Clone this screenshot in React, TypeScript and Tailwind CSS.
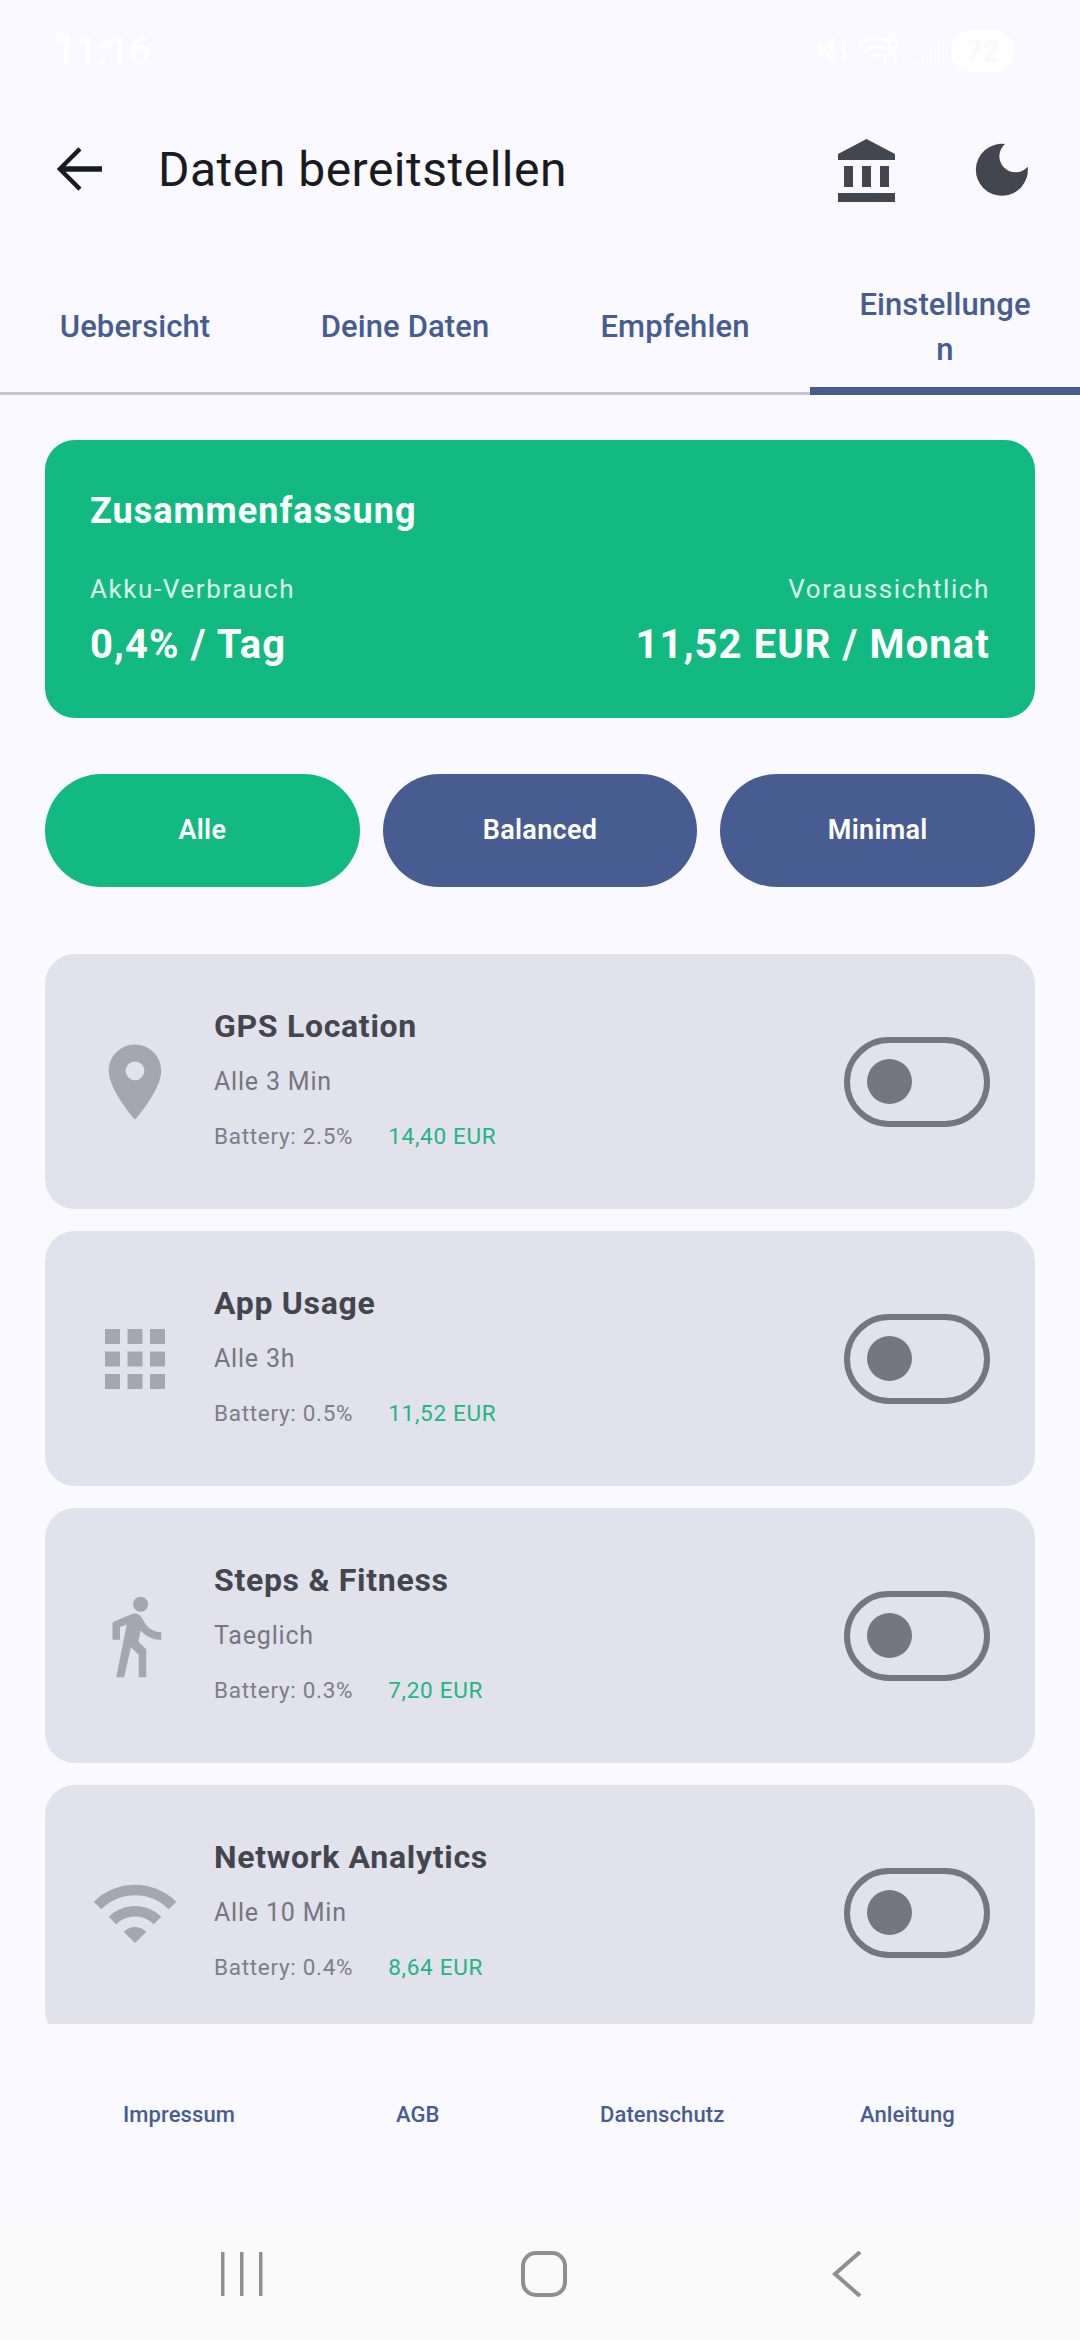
const rows = [
  { title: 'GPS Location', freq: 'Alle 3 Min', battery: 'Battery: 2.5%', price: '14,40 EUR', icon: 'M12 2C8.13 2 5 5.13 5 9c0 5.25 7 13 7 13s7-7.75 7-13c0-3.87-3.13-7-7-7zm0 9.5a2.5 2.5 0 010-5 2.5 2.5 0 010 5z' },
  { title: 'App Usage', freq: 'Alle 3h', battery: 'Battery: 0.5%', price: '11,52 EUR', icon: 'M4 8h4V4H4v4zm6 12h4v-4h-4v4zm-6 0h4v-4H4v4zm0-6h4v-4H4v4zm6 0h4v-4h-4v4zm6-10v4h4V4h-4zm-6 4h4V4h-4v4zm6 6h4v-4h-4v4zm0 6h4v-4h-4v4z' },
  { title: 'Steps & Fitness', freq: 'Taeglich', battery: 'Battery: 0.3%', price: '7,20 EUR', icon: 'M13.5 5.5c1.1 0 2-.9 2-2s-.9-2-2-2-2 .9-2 2 .9 2 2 2zM9.8 8.9L7 23h2.1l1.8-8 2.1 2v6h2v-7.5l-2.1-2 .6-3C14.8 12 16.8 13 19 13v-2c-1.9 0-3.5-1-4.3-2.4l-1-1.6c-.4-.6-1-1-1.7-1-.3 0-.5.1-.8.1L6 8.3V13h2V9.6l1.8-.7' },
  { title: 'Network Analytics', freq: 'Alle 10 Min', battery: 'Battery: 0.4%', price: '8,64 EUR', icon: 'M1 9l2 2c4.97-4.97 13.03-4.97 18 0l2-2C16.93 2.93 7.08 2.93 1 9zm8 8l3 3 3-3c-1.65-1.66-4.34-1.66-6 0zm-4-4l2 2c2.76-2.76 7.24-2.76 10 0l2-2C15.14 9.14 8.87 9.14 5 13z' },
];

function StatusBar() {
  return (
    <div className="flex h-[104px] items-center justify-between pb-[2px] pl-[54px] pr-[66px] text-white">
      <span className="text-[38px] font-medium leading-none">11:16</span>
      <div className="flex items-center gap-[10px]">
        <svg viewBox="0 0 30 32" className="h-[32px] w-[30px]" fill="currentColor">
          <path d="M1 11h6l11-9v28l-11-9H1z" />
          <path d="M2 2l18 26" stroke="#f9f9ff" strokeWidth="2" />
          <path d="M25 2c3 3-2 5 1 8s-2 5 1 8-2 5 1 8" fill="none" stroke="currentColor" strokeWidth="2" />
        </svg>
        <svg viewBox="0 0 46 32" className="h-[32px] w-[46px]" fill="none" stroke="currentColor" strokeWidth="3">
          <path d="M2 10c8-7 20-8 30-4M8 16c6-5 14-5 20-2M14 21c3-2 6-2 9 0" />
          <path d="M28 20v10M38 30V20" />
          <circle cx="36" cy="9" r="4" />
        </svg>
        <svg viewBox="0 0 28 30" className="h-[30px] w-[28px]" fill="currentColor" opacity="0.6">
          <rect x="0" y="24" width="3" height="5" />
          <rect x="8" y="17" width="3" height="12" />
          <rect x="16" y="9" width="3" height="20" />
          <rect x="24" y="1" width="3" height="28" />
        </svg>
        <span className="flex h-[42px] w-[63px] items-center justify-center rounded-full bg-white text-[30px] font-bold leading-none text-[#f9f9ff]">
          72
        </span>
      </div>
    </div>
  );
}

function Header() {
  return (
    <div className="flex h-[130px] items-center pl-[56px]">
      <svg viewBox="0 0 48 46" className="h-[46px] w-[46px]" fill="none" stroke="#1a1b20" strokeWidth="4.5">
        <path d="M48 23H6" strokeWidth="5.5" />
        <path d="M25 2L4 23l21 21" />
      </svg>
      <h1 className="ml-[56px] pt-[2px] text-[48px] leading-none tracking-[0.5px] text-[#1a1b20]">Daten bereitstellen</h1>
      <svg viewBox="0 0 24 24" className="ml-auto mt-[6px] h-[72px] w-[72px]" fill="#44464f">
        <path d="M4 10v7h3v-7H4zm6 0v7h3v-7h-3zM2 22h19v-3H2v3zm14-12v7h3v-7h-3zm-4.5-9L2 6v2h19V6l-9.5-5z" />
      </svg>
      <svg viewBox="0 0 72 72" className="ml-[62px] mr-[42px] mt-[2px] h-[72px] w-[72px]" fill="#44464f">
        <path d="M39 10A26 26 0 1 0 61.7 32.7A16.1 16.1 0 1 1 39 10z" />
      </svg>
    </div>
  );
}

function Tabs() {
  return (
    <div className="flex h-[161px] border-b-[3px] border-[#c5c6d0]">
      {['Uebersicht', 'Deine Daten', 'Empfehlen'].map((t) => (
        <div key={t} className="flex w-[270px] items-center justify-center pt-[27px] text-[31px] font-medium leading-[45px] tracking-[0.1px] text-[#475d92]">
          {t}
        </div>
      ))}
      <div className="mb-[-3px] flex w-[270px] items-center justify-center border-b-[8px] border-[#475d92] px-[48px] pt-[32px] text-center text-[31px] font-medium leading-[45px] tracking-[0.1px] text-[#475d92] break-all">
        Einstellungen
      </div>
    </div>
  );
}

function Summary() {
  return (
    <div className="h-[278px] rounded-[30px] bg-[#12ba82] p-[45px] text-white">
      <div className="text-[36px] font-bold leading-[52px] tracking-[1px]">Zusammenfassung</div>
      <div className="mt-[32px] flex justify-between">
        <div>
          <div className="text-[26px] leading-[40px] tracking-[1.6px] text-white/85">Akku-Verbrauch</div>
          <div className="mt-[10px] text-[40px] font-bold leading-[52px] tracking-[1.1px]">0,4% / Tag</div>
        </div>
        <div className="text-right">
          <div className="text-[26px] leading-[40px] tracking-[1.6px] text-white/85">Voraussichtlich</div>
          <div className="mt-[10px] text-[40px] font-bold leading-[52px] tracking-[1.1px]">11,52 EUR / Monat</div>
        </div>
      </div>
    </div>
  );
}

function Filters() {
  return (
    <div className="mt-[56px] flex gap-[23px]">
      <button className="h-[113px] flex-1 rounded-full bg-[#12ba82] text-[27px] font-semibold tracking-[0.3px] text-white">Alle</button>
      <button className="h-[113px] flex-1 rounded-full bg-[#475d92] text-[27px] font-semibold tracking-[0.3px] text-white">Balanced</button>
      <button className="h-[113px] flex-1 rounded-full bg-[#475d92] text-[27px] font-semibold tracking-[0.3px] text-white">Minimal</button>
    </div>
  );
}

function Row({ row }: { row: (typeof rows)[number] }) {
  return (
    <div className="flex h-[255px] shrink-0 items-center rounded-[30px] bg-[#e1e2ec] pl-[45px] pr-[45px]">
      <svg viewBox="0 0 24 24" className="h-[90px] w-[90px] shrink-0" fill="#a5a6b0">
        <path d={row.icon} />
      </svg>
      <div className="ml-[34px]">
        <div className="text-[32px] font-bold leading-[55px] tracking-[0.7px] text-[#44464f]">{row.title}</div>
        <div className="text-[25px] leading-[55px] tracking-[0.8px] text-[#757680]">{row.freq}</div>
        <div className="flex text-[22.5px] leading-[55px] tracking-[0.7px]">
          <span className="text-[#7d7e88]">{row.battery}</span>
          <span className="ml-[35px] text-[#22b585]">{row.price}</span>
        </div>
      </div>
      <div className="ml-auto flex h-[90px] w-[146px] items-center rounded-full border-[6px] border-[#757680] pl-[17px]">
        <div className="h-[45px] w-[45px] rounded-full bg-[#757680]" />
      </div>
    </div>
  );
}

function FooterLinks() {
  return (
    <div className="flex h-[186px] items-center pb-[6px] pl-[123px] text-[22px] font-medium tracking-[0.1px] text-[#475d92]">
      <span className="w-[273px]">Impressum</span>
      <span className="w-[204px]">AGB</span>
      <span className="w-[260px]">Datenschutz</span>
      <span>Anleitung</span>
    </div>
  );
}

function NavBar() {
  return (
    <div className="relative flex h-[130px] items-center bg-[#fafafa] pb-[2px]">
      <svg viewBox="0 0 42 44" className="ml-[221px] h-[44px] w-[42px]" fill="#8f8f8f">
        <rect x="0" y="0" width="3.5" height="44" />
        <rect x="19" y="0" width="3.5" height="44" />
        <rect x="38" y="0" width="3.5" height="44" />
      </svg>
      <svg viewBox="0 0 46 46" className="ml-[258px] h-[46px] w-[46px]" fill="none" stroke="#8f8f8f" strokeWidth="4">
        <rect x="2" y="2" width="42" height="42" rx="13" />
      </svg>
      <svg viewBox="0 0 30 46" className="ml-[265px] h-[46px] w-[30px]" fill="none" stroke="#8f8f8f" strokeWidth="4">
        <path d="M28 1L3 23l25 22" />
      </svg>
    </div>
  );
}

export default function App() {
  return (
    <div className="flex h-[2340px] w-[1080px] flex-col overflow-hidden bg-[#f9f9ff] font-['Roboto',sans-serif]">
      <StatusBar />
      <Header />
      <Tabs />
      <div className="px-[45px] pt-[45px]">
        <Summary />
        <Filters />
        <div className="mt-[67px] flex h-[1070px] flex-col gap-[22px] overflow-hidden">
          {rows.map((r) => (
            <Row key={r.title} row={r} />
          ))}
        </div>
      </div>
      <FooterLinks />
      <NavBar />
    </div>
  );
}
